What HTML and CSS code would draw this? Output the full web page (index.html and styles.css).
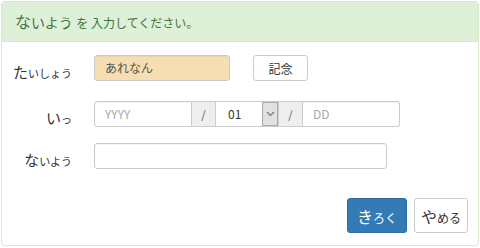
FILE: index.html
```html
<!DOCTYPE html>
<html lang="ja">

<head>
    <meta charset="UTF-8">
    <meta name="viewport" content="width=device-width, initial-scale=1.0">
    <title>入力</title>
    <link rel="stylesheet" href="styles.css">
</head>

<body>
    <div class="panel">
        <div class="panel-heading">
            <span class="big">な</span><span class="mid">いよう</span>
            <span class="small">を 入力してください。</span>
        </div>
        <div class="panel-body">
            <!-- たいしょう -->
            <div class="form-row row-1">
                <label class="row-label"><span class="big">た</span><span class="tiny">いしょう</span></label>
                <div class="input-box input-wheat width-136">あれなん</div>
                <button type="button" class="btn btn-default btn-memo">記念</button>
            </div>
            <!-- いっ -->
            <div class="form-row row-2">
                <label class="row-label"><span class="big">い</span><span class="tiny">っ</span></label>
                <div class="input-group">
                    <div class="input-box group-first width-98 placeholder">YYYY</div>
                    <div class="addon">/</div>
                    <div class="select-box">
                        <span class="select-value">01</span>
                        <span class="select-arrow">
                            <svg width="9" height="6" viewBox="0 0 9 6">
                                <path d="M1 1 L4.5 4.5 L8 1" fill="none" stroke="#777" stroke-width="1.2" />
                            </svg>
                        </span>
                    </div>
                    <div class="addon">/</div>
                    <div class="input-box group-last width-98 placeholder">DD</div>
                </div>
            </div>
            <!-- ないよう -->
            <div class="form-row row-3">
                <label class="row-label"><span class="big">な</span><span class="tiny">いよう</span></label>
                <div class="input-box width-293"></div>
            </div>
            <div class="form-actions">
                <button type="button" class="btn btn-primary"><span class="big">き</span><span class="tiny">ろく</span></button>
                <button type="button" class="btn btn-default btn-cancel"><span class="big">や</span><span class="tiny">める</span></button>
            </div>
        </div>
    </div>
</body>

</html>
```

FILE: styles.css
```css
body {
    margin: 0;
    font-family: "Noto Sans CJK JP", "Liberation Sans", sans-serif;
    color: #333;
    background: #fff;
}

.panel {
    width: 478px;
    height: 245px;
    margin: 1px 0 0 1px;
    border: 1px solid #d6e9c6;
    border-radius: 4px;
    box-sizing: border-box;
}

.panel-heading {
    height: 40px;
    box-sizing: border-box;
    padding: 8px 13px 0;
    background-color: #dff0d8;
    border-bottom: 1px solid #d6e9c6;
    color: #3c763d;
    border-radius: 3px 3px 0 0;
    line-height: 22px;
}

.panel-heading .big {
    font-size: 16px;
}

.panel-heading .mid {
    font-size: 14px;
}

.panel-heading .small {
    font-size: 12px;
}

.panel-body {
    padding: 13px 0 0 0;
}

.form-row {
    display: flex;
    align-items: center;
    height: 26px;
}

.row-2 {
    margin-top: 20px;
}

.row-3 {
    margin-top: 16px;
}

.row-label {
    width: 70px;
    text-align: right;
    margin-right: 22px;
    padding-top: 8px;
    color: #333;
    line-height: 20px;
}

.big {
    font-size: 15px;
}

.tiny {
    font-size: 11px;
}

.input-box {
    height: 26px;
    box-sizing: border-box;
    border: 1px solid #ccc;
    border-radius: 3px;
    padding: 0 10px;
    font-size: 12px;
    line-height: 24px;
    color: #555;
    background: #fff;
    box-shadow: inset 0 1px 1px rgba(0, 0, 0, 0.05);
}

.input-wheat {
    background-color: #f6deb2;
}

.width-136 {
    width: 136px;
}

.width-98 {
    width: 98px;
}

.width-293 {
    width: 293px;
}

.placeholder {
    color: #aaa;
}

.input-group {
    display: flex;
    height: 26px;
}

.group-first {
    border-radius: 3px 0 0 3px;
}

.group-last {
    border-radius: 0 3px 3px 0;
    border-left: 0;
    width: 97px;
}

.addon {
    width: 24px;
    height: 26px;
    box-sizing: border-box;
    background: #eee;
    border: 1px solid #ccc;
    border-left: 0;
    text-align: center;
    font-size: 11px;
    line-height: 24px;
    color: #555;
}

.select-box {
    display: flex;
    width: 63px;
    height: 26px;
    box-sizing: border-box;
    border: 1px solid #ccc;
    border-left: 0;
    background: #fff;
}

.select-value {
    flex: 1;
    padding-left: 12px;
    font-size: 12px;
    line-height: 24px;
    color: #333;
}

.select-arrow {
    width: 14px;
    background: #e1e1e1;
    border: 1px solid #aaa;
    display: flex;
    align-items: center;
    justify-content: center;
}

.btn {
    font-family: "Noto Sans CJK JP", "Liberation Sans", sans-serif;
    border-radius: 3px;
    cursor: pointer;
    box-sizing: border-box;
    padding: 0;
}

.btn-default {
    background: #fff;
    border: 1px solid #ccc;
    color: #333;
}

.btn-memo {
    width: 55px;
    height: 26px;
    margin-left: 23px;
    font-size: 12px;
}

.form-actions {
    display: flex;
    justify-content: flex-end;
    gap: 7px;
    margin-top: 29px;
    padding-right: 10px;
}

.btn-primary {
    width: 60px;
    height: 35px;
    background: #337ab7;
    border: 1px solid #2e6da4;
    color: #fff;
}

.btn-cancel {
    width: 54px;
    height: 35px;
}

.btn .big {
    font-size: 16px;
}

.btn .tiny {
    font-size: 12px;
}
```
